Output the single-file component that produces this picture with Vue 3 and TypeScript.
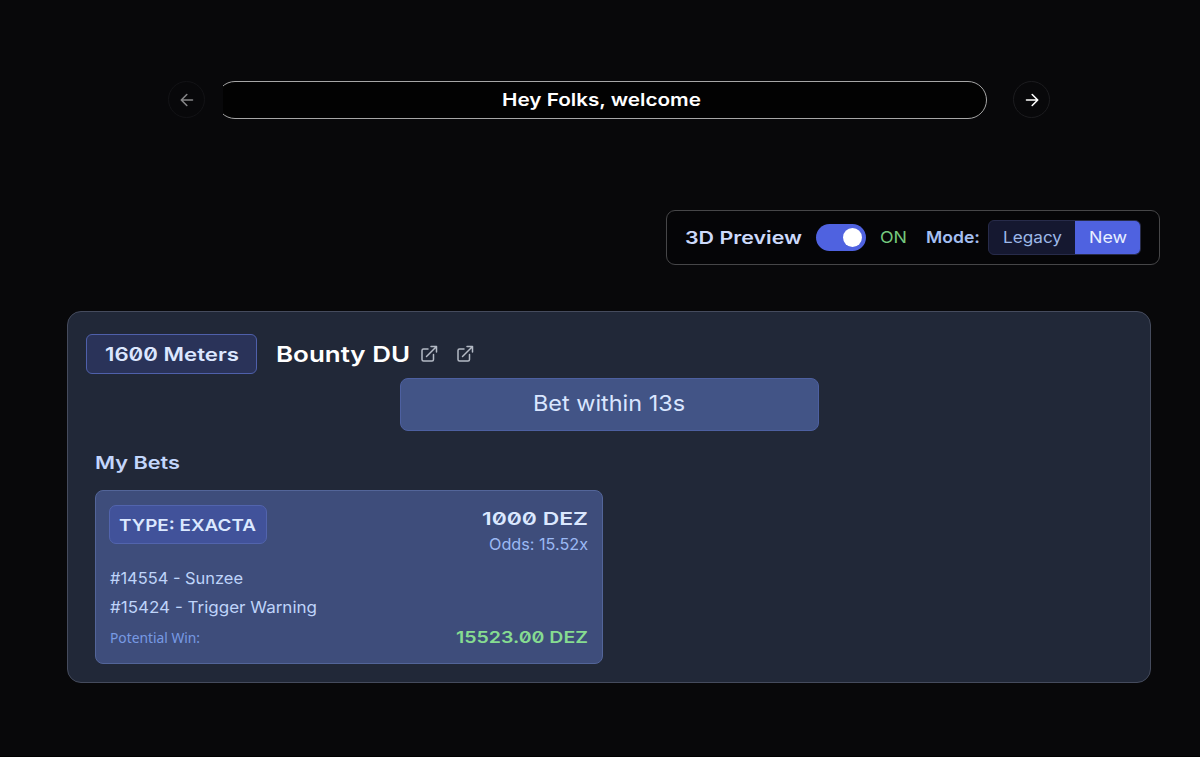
<script setup lang="ts">
import { h, ref } from 'vue'

interface LabelProps {
  text: string
  width: number
  cap: number
}

// Single-line label whose box is exactly its cap height, with a fixed advance width.
const FitLabel = (props: LabelProps) =>
  h('svg', { width: props.width, height: props.cap, style: { overflow: 'visible', display: 'block', flex: 'none' } }, [
    h(
      'text',
      {
        x: 0,
        y: props.cap,
        textLength: props.width,
        lengthAdjust: 'spacingAndGlyphs',
        'font-size': props.cap / 0.727,
        fill: 'currentColor',
      },
      props.text,
    ),
  ])
FitLabel.props = ['text', 'width', 'cap']

const previewOn = ref(true)
const mode = ref<'legacy' | 'new'>('new')
const runners = [
  { label: '#14554 - Sunzee', width: 133 },
  { label: '#15424 - Trigger Warning', width: 207 },
]
</script>

<template>
  <main class="page">
    <section class="carousel">
      <button class="arrow disabled" aria-label="Previous">
        <svg width="14" height="14" viewBox="0 0 14 14"><path d="M12.5 7H1.5M6.8 1.5L1.3 7l5.5 5.5" /></svg>
      </button>
      <div class="viewport">
        <div class="slide"><FitLabel class="display" text="Hey Folks, welcome" :width="199" :cap="12.8" /></div>
      </div>
      <button class="arrow" aria-label="Next">
        <svg width="14" height="14" viewBox="0 0 14 14"><path d="M1.5 7h11M7.2 1.5L12.7 7l-5.5 5.5" /></svg>
      </button>
    </section>

    <section class="settings">
      <FitLabel class="display preview" text="3D Preview" :width="117" :cap="12.5" />
      <button class="toggle" :class="{ on: previewOn }" aria-label="3D Preview" @click="previewOn = !previewOn"><i /></button>
      <FitLabel class="body on-text" text="ON" :width="27" :cap="11.7" />
      <FitLabel class="display mode" text="Mode:" :width="54" :cap="12" />
      <div class="segment">
        <button class="legacy" :class="{ active: mode === 'legacy' }" @click="mode = 'legacy'">
          <FitLabel class="body" text="Legacy" :width="59" :cap="11.7" />
        </button>
        <button class="new" :class="{ active: mode === 'new' }" @click="mode = 'new'">
          <FitLabel class="body" text="New" :width="38" :cap="11.7" />
        </button>
      </div>
    </section>

    <section class="race">
      <header class="race-head">
        <div class="distance"><FitLabel class="display" text="1600 Meters" :width="134" :cap="13.3" /></div>
        <FitLabel class="display title" text="Bounty DU" :width="134" :cap="16" />
        <svg v-for="n in 2" :key="n" class="external" width="18" height="18" viewBox="0 0 18 18">
          <path d="M8 4H3.5Q2 4 2 5.5v9Q2 16 3.5 16h8.5Q13.5 16 13.5 14.5V9.500M11 1.500h5.500V7M16.500 1.500L6.500 11.500" />
        </svg>
      </header>
      <div class="countdown"><FitLabel class="body" text="Bet within 13s" :width="152" :cap="15.7" /></div>
      <FitLabel class="display bets-title" text="My Bets" :width="85" :cap="12.5" />
      <article class="bet">
        <div class="bet-head">
          <div class="type"><FitLabel class="display" text="TYPE: EXACTA" :width="137" :cap="12" /></div>
          <div class="stake">
            <FitLabel class="display" text="1000 DEZ" :width="106" :cap="13" />
            <FitLabel class="body odds" text="Odds: 15.52x" :width="99" :cap="11.8" />
          </div>
        </div>
        <div class="runners">
          <FitLabel v-for="r in runners" :key="r.label" class="body" :text="r.label" :width="r.width" :cap="11.7" />
        </div>
        <div class="win">
          <FitLabel class="potential" text="Potential Win:" :width="90" :cap="10.2" />
          <FitLabel class="display amount" text="15523.00 DEZ" :width="132" :cap="11.8" />
        </div>
      </article>
    </section>
  </main>
</template>

<style>
body {
  margin: 0;
  background: #08080a;
}
</style>

<style scoped>
* {
  box-sizing: border-box;
}
.page {
  width: 1200px;
  height: 757px;
  padding-top: 81px;
  background: #08080a;
  border-bottom: 1px solid #000;
  overflow: hidden;
}
button {
  padding: 0;
  border: 0;
  background: none;
  color: inherit;
  display: flex;
  align-items: center;
}
.display {
  font-family: Inter, "DejaVu Sans", sans-serif;
  font-weight: 600;
  font-feature-settings: "zero" 1;
}
.body {
  font-family: Inter, "Open Sans", sans-serif;
  font-weight: 400;
}
.carousel {
  display: flex;
  align-items: center;
  height: 38px;
  margin-left: 168px;
  color: #fff;
}
.arrow {
  width: 37px;
  height: 37px;
  margin-bottom: 1px;
  border: 1px solid #1c1c1f;
  border-radius: 50%;
  justify-content: center;
}
.arrow path {
  fill: none;
  stroke: #fff;
  stroke-width: 1.6;
  stroke-linecap: round;
  stroke-linejoin: round;
}
.arrow.disabled {
  border-color: #131316;
}
.arrow.disabled path {
  stroke: #858587;
}
.viewport {
  width: 764px;
  margin: 0 26px 0 18px;
  overflow: hidden;
}
.slide {
  display: flex;
  align-items: center;
  height: 38px;
  margin-left: -7px;
  padding: 0 0 1px 285px;
  border: 1px solid #a6a6a6;
  border-radius: 19px;
  background: #020202;
}
.settings {
  display: flex;
  align-items: center;
  width: 494px;
  height: 55px;
  margin: 91px 0 0 666px;
  padding-left: 18px;
  border: 1px solid #464648;
  border-radius: 9px;
  background: #050507;
}
.preview {
  color: #cddafb;
}
.toggle {
  width: 50px;
  height: 27px;
  margin: 0 14px 0 14px;
  padding: 0 4px;
  border-radius: 14px;
  background: #303858;
}
.toggle.on {
  justify-content: flex-end;
  background: #4f62e0;
}
.toggle i {
  width: 19px;
  height: 19px;
  border-radius: 50%;
  background: #fff;
}
.on-text {
  margin-bottom: 1.5px;
  color: #75c97e;
}
.mode {
  margin: 0 0 1.5px 19px;
  color: #a4bff2;
}
.segment {
  display: flex;
  width: 153px;
  height: 35px;
  margin-left: 8px;
  border: 1px solid #272b4a;
  border-radius: 6px;
  background: #151830;
  color: #9db8e8;
  overflow: hidden;
}
.segment button {
  height: 33px;
  padding-bottom: 1.5px;
  justify-content: center;
}
.legacy {
  width: 86px;
}
.new {
  width: 65px;
}
.segment .active {
  background: #4f62e0;
  color: #e8efff;
}
.race {
  width: 1084px;
  height: 372px;
  margin: 46px 0 0 67px;
  padding: 22px 0 0 18px;
  border: 1px solid #454b5d;
  border-radius: 14px;
  background: #212838;
}
.race-head {
  display: flex;
  align-items: center;
  height: 40px;
}
.distance {
  display: flex;
  align-items: center;
  width: 171px;
  height: 40px;
  padding: 1.5px 0 0 17.5px;
  border: 1px solid #4f60ab;
  border-radius: 6px;
  background: #2a3359;
  color: #dce7ff;
}
.title {
  margin: 0 10px 0 18.5px;
  color: #fff;
}
.external {
  fill: none;
  stroke: #b4bac5;
  stroke-width: 1.5;
  stroke-linecap: round;
  stroke-linejoin: round;
}
.external + .external {
  margin-left: 18px;
}
.countdown {
  display: flex;
  align-items: center;
  justify-content: center;
  width: 419px;
  height: 53px;
  margin: 4px 0 0 314px;
  padding: 0 1.5px 3.5px 0;
  border: 1px solid #4d60a1;
  border-radius: 8px;
  background: #425486;
  color: #d9e6ff;
}
.bets-title {
  margin: 25px 0 0 9px;
  color: #c3d6fc;
}
.bet {
  width: 508px;
  height: 174px;
  margin: 21.5px 0 0 9px;
  padding: 14px 14.5px 0 13px;
  border: 1px solid #536599;
  border-radius: 8px;
  background: #3e4d7b;
}
.bet-head {
  display: flex;
  justify-content: space-between;
}
.type {
  display: flex;
  align-items: center;
  width: 158px;
  height: 39px;
  padding: 1px 0 0 9px;
  border: 1px solid #5264ad;
  border-radius: 7px;
  background: #41529a;
  color: #dbe8ff;
}
.stake {
  display: flex;
  flex-direction: column;
  align-items: flex-end;
  gap: 13px;
  height: 52px;
  padding-top: 7px;
  color: #dbe8ff;
}
.odds {
  color: #9bb9f4;
}
.runners {
  display: flex;
  flex-direction: column;
  gap: 17.5px;
  margin: 15px 0 0 1px;
  color: #bfd4fa;
}
.win {
  display: flex;
  justify-content: space-between;
  align-items: center;
  margin: 18px 0 0 0.5px;
}
.potential {
  margin-top: 2px;
  color: #789ae4;
  font-family: "Noto Sans", sans-serif;
}
.amount {
  color: #86dc91;
}
</style>
